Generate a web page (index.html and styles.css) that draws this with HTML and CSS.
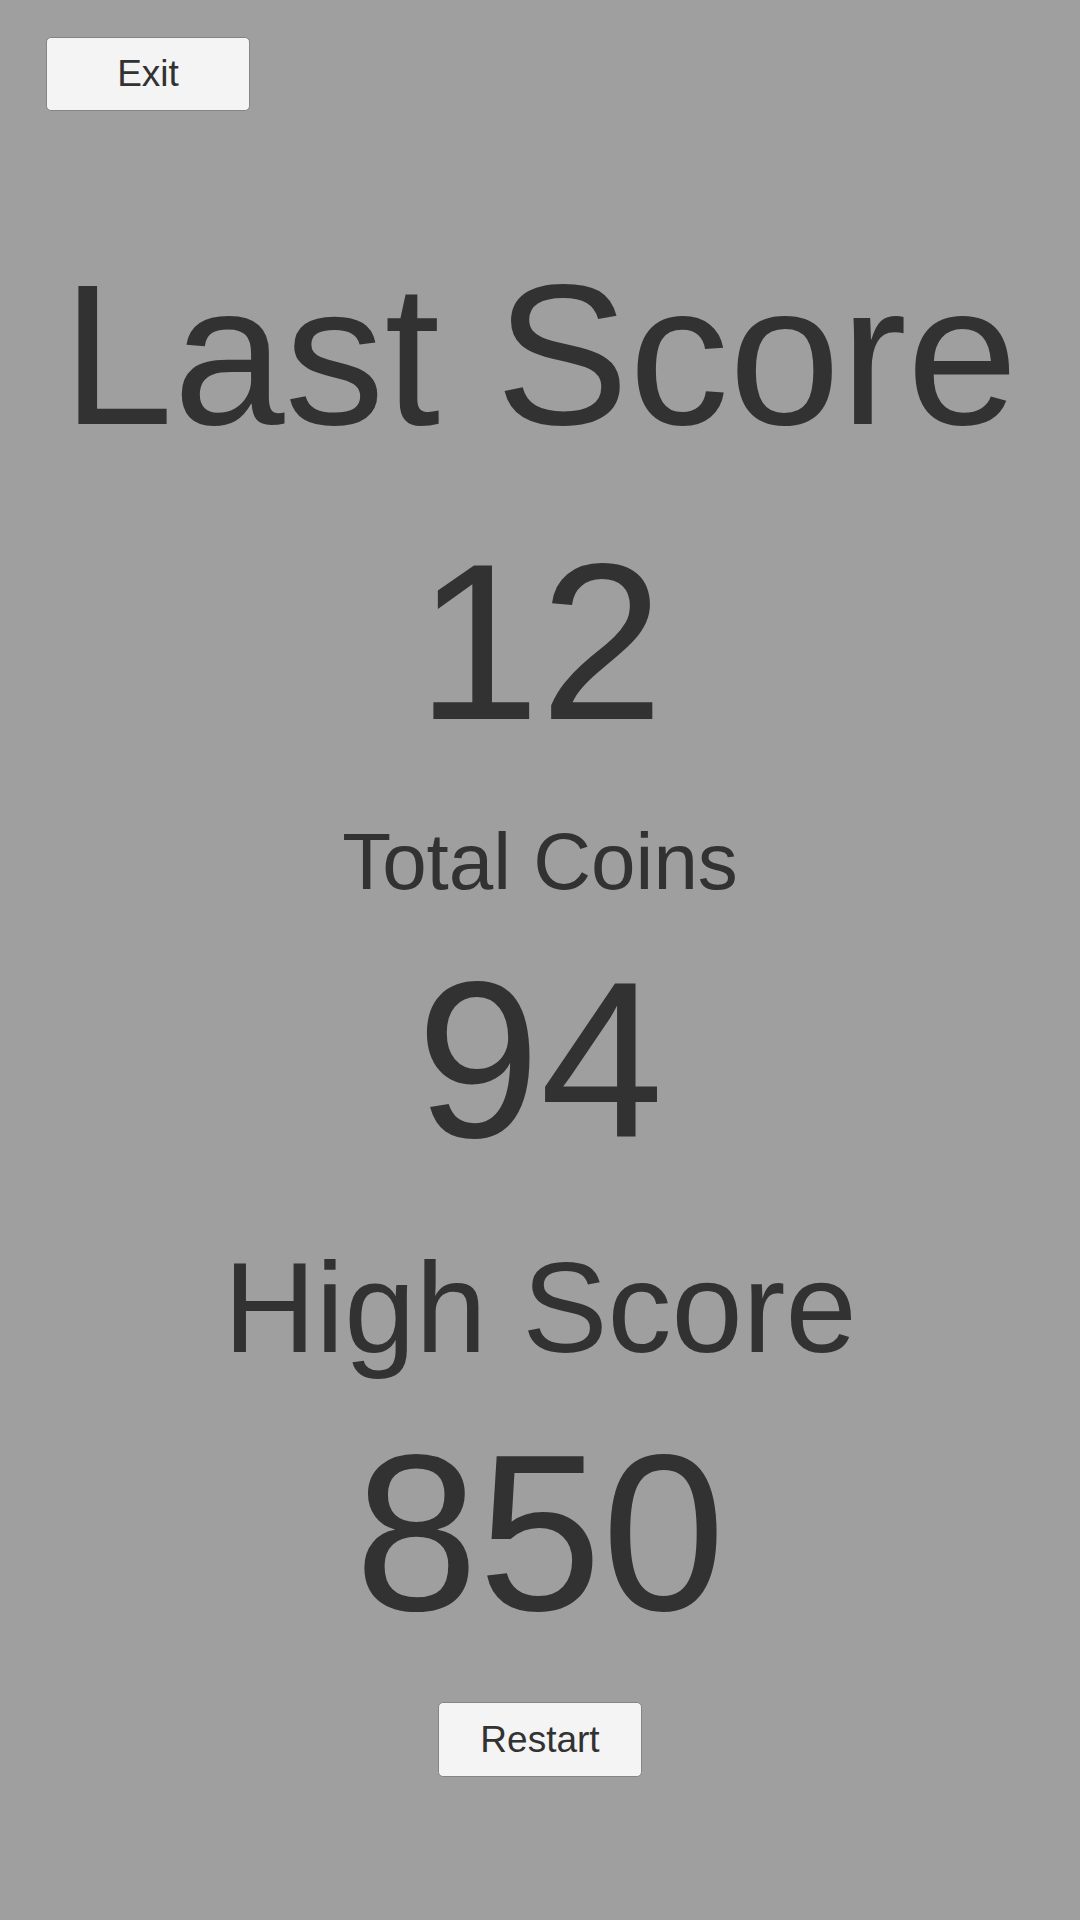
FILE: index.html
```html
<!DOCTYPE html>
<html lang="en">
<head>
<meta charset="utf-8">
<title>Game Over</title>
<link rel="stylesheet" href="styles.css">
</head>
<body>
<div class="screen">
  <div class="topbar">
    <button class="btn">Exit</button>
  </div>
  <main class="results">
    <div class="title">Last Score</div>
    <div class="number number-last">12</div>
    <div class="label">Total Coins</div>
    <div class="number number-coins">94</div>
    <div class="subtitle">High Score</div>
    <div class="number number-high">850</div>
    <button class="btn btn-restart">Restart</button>
  </main>
</div>
</body>
</html>
```
FILE: styles.css
```css
html, body {
  margin: 0;
  padding: 0;
}
body {
  background: #9f9f9f;
  font-family: "Liberation Sans", Arial, sans-serif;
  color: #323232;
}
.screen {
  width: 1080px;
  height: 1920px;
  box-sizing: border-box;
  padding-top: 37px;
}
.topbar {
  display: flex;
  padding-left: 46px;
}
.btn {
  display: flex;
  align-items: center;
  justify-content: center;
  width: 204px;
  height: 74px;
  box-sizing: border-box;
  background: #f4f4f4;
  border: 1.5px solid #858585;
  border-radius: 5px;
  font-family: "Liberation Sans", Arial, sans-serif;
  font-size: 37px;
  color: #323232;
  padding: 0;
  margin: 0;
}
.results {
  display: flex;
  flex-direction: column;
  align-items: center;
  text-align: center;
}
.title {
  font-size: 200px;
  line-height: 200px;
  margin-top: 144px;
}
.number {
  font-size: 222px;
  line-height: 222px;
}
.number-last {
  margin-top: 76px;
}
.label {
  font-size: 80px;
  line-height: 80px;
  margin-top: 69px;
}
.number-coins {
  margin-top: 47px;
}
.subtitle {
  font-size: 128px;
  line-height: 128px;
  margin-top: 73px;
}
.number-high {
  margin-top: 50px;
}
.btn-restart {
  margin-top: 58px;
  height: 75px;
}
```
